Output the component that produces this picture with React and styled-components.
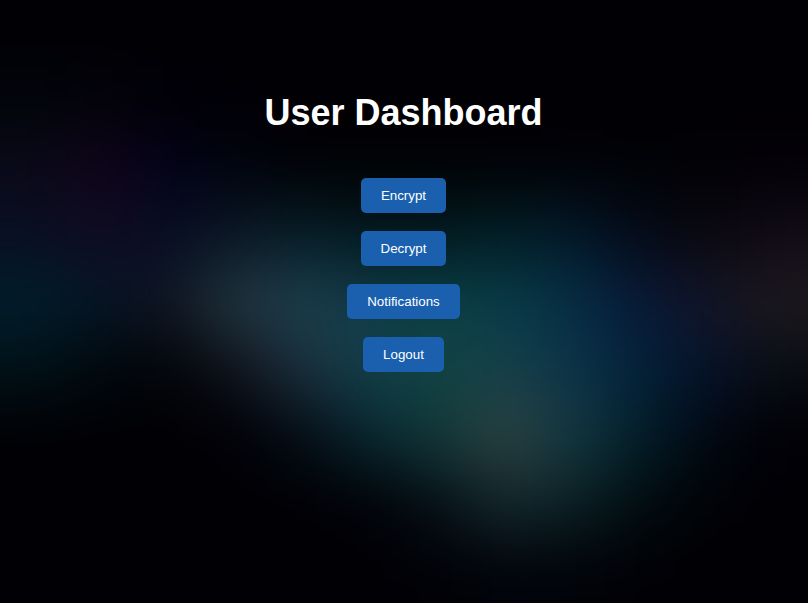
import React from "react";
import styled, { createGlobalStyle } from "styled-components";

const GlobalStyle = createGlobalStyle`
  body {
    margin: 0;
    background: #010005;
    overflow: hidden;
  }
`;

/* Colour field of the aurora backdrop, one row per line, top to bottom. */
const AURORA = [
  "010004 010004 010004 010004 010004 010004 010004 010004 010004 010004 010004 010004",
  "01050a 02030a 010007 010005 010004 010004 010004 010004 010004 010004 010004 010004",
  "0b0919 12041a 03021a 01030f 010206 010204 010204 010206 010207 010206 020105 030107",
  "080f22 110b22 070e23 0a1724 061e28 02191f 021a21 021f25 03192a 040a18 0a080e 110b17",
  "011e2c 041625 111523 223840 1d3e4e 103b48 0b3f45 083c49 062e44 081938 131427 1e191e",
  "011117 01070d 020408 0f121c 1c303d 12404c 104442 173f49 0b3449 03213a 05122a 090d14",
  "010004 010004 010004 010006 040c16 09272e 12383a 2e4240 143841 031f2a 010812 010005",
  "010004 010004 010004 010004 010004 010209 050f16 14282e 0b2125 010c10 010206 010005",
  "010004 010004 010004 010004 010004 010004 010106 01030a 010309 010005 010004 010004",
].map((line) => line.split(" ").map((hex) => `#${hex}`));

/* Repeats the outermost cells so the blur stays solid at the page edges. */
const withEdges = (list) => [list[0], ...list, list[list.length - 1]];
const CELLS = withEdges(AURORA.map(withEdges)).flat();

const Page = styled.div`
  position: relative;
  isolation: isolate;
  width: 100%;
  height: 100vh;
  overflow: hidden;
  box-sizing: border-box;
  font-family: "Liberation Sans", Arial, sans-serif;
`;

const Backdrop = styled.div`
  position: absolute;
  z-index: -1;
  inset: calc(-100% / 9) calc(-100% / 12);
  display: grid;
  grid-template-columns: repeat(14, 1fr);
  grid-template-rows: repeat(11, 1fr);
  filter: blur(32px);
`;

const Tint = styled.div`
  background: ${({ $color }) => $color};
`;

const Content = styled.main`
  display: flex;
  flex-direction: column;
  align-items: center;
  padding: 92px 1px 0 0;
`;

const Title = styled.h1`
  margin: 0 0 44px;
  color: #fff;
  font-size: 36px;
  font-weight: 700;
  line-height: 42px;
`;

const Menu = styled.nav`
  display: flex;
  flex-direction: column;
  align-items: center;
  gap: 18px;
`;

const MenuButton = styled.button`
  height: 35px;
  padding: 10px 20px;
  border: none;
  border-radius: 5px;
  background: #1a60ae;
  color: #fff;
  font-family: inherit;
  font-size: 13.333px;
  line-height: 15px;
  cursor: pointer;
`;

export default function App() {
  return (
    <Page>
      <GlobalStyle />
      <Backdrop aria-hidden="true">
        {CELLS.map((color, i) => (
          <Tint key={i} $color={color} />
        ))}
      </Backdrop>
      <Content>
        <Title>User Dashboard</Title>
        <Menu>
          <MenuButton>Encrypt</MenuButton>
          <MenuButton>Decrypt</MenuButton>
          <MenuButton>Notifications</MenuButton>
          <MenuButton>Logout</MenuButton>
        </Menu>
      </Content>
    </Page>
  );
}
